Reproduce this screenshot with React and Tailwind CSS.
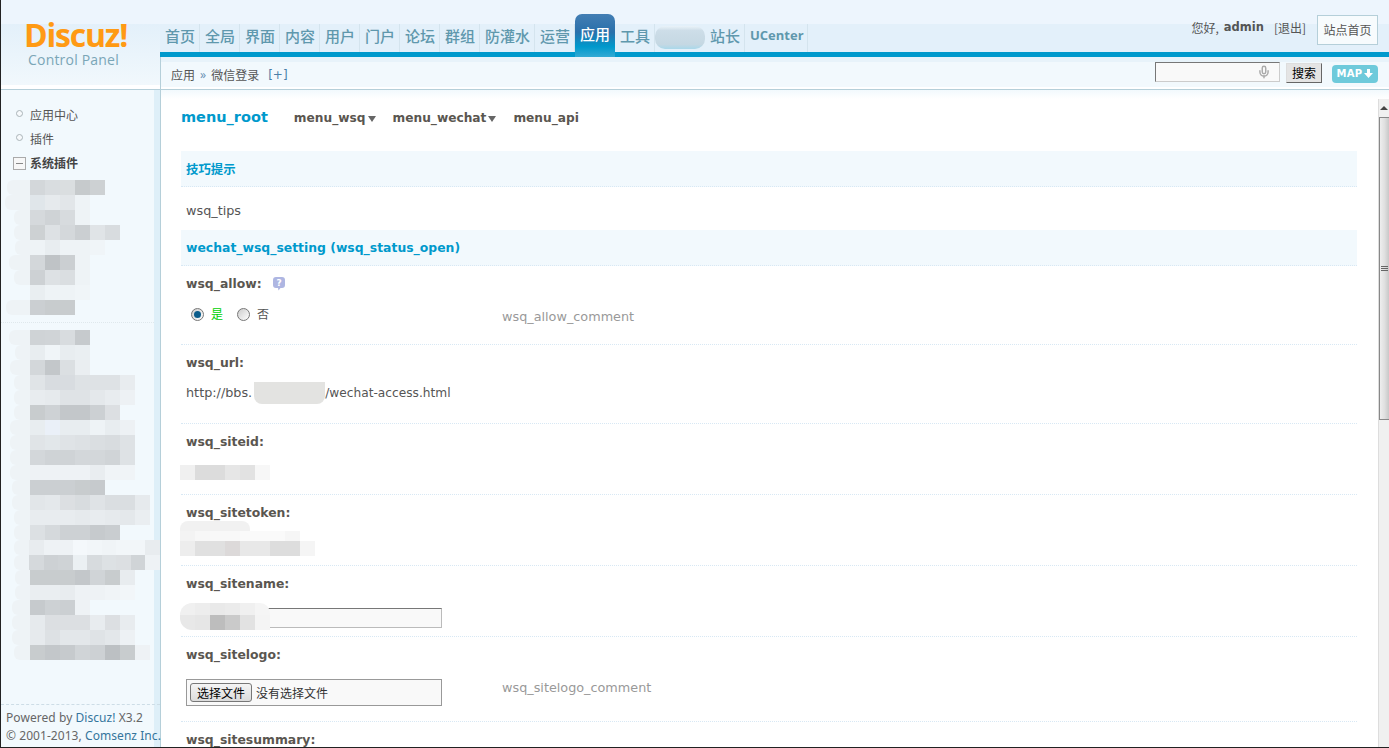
import React from "react";
import { Mic } from "lucide-react";

const CJK = "font-['Noto_Sans_CJK_SC',sans-serif]";
const LATIN = "font-['DejaVu_Sans','Noto_Sans_CJK_SC',sans-serif]";

const navItems = ["首页", "全局", "界面", "内容", "用户", "门户", "论坛", "群组", "防灌水", "运营"];

// blurred sidebar rows: left offset of the soft edge + grey cells
const sideBlur = [
  { lead: 23, cells: ["#d3d7da", "#d9dde0", "#dadee0", "#c6cacc", "#cdd1d3"] },
  { lead: 25, cells: ["#e0e6ea", "#e6eaed", "#e2e6e9", "#eef3f6"] },
  { lead: 16, cells: ["#d5d9dc", "#cfd3d6", "#d7dbde", "#eef3f6"] },
  { lead: 16, cells: ["#cdd1d3", "#dde1e4", "#d4d8db", "#cbcfd2", "#e0e4e7", "#d8dcdf"] },
  { lead: 15, cells: ["#eef3f6", "#e8edf0", "#eef3f6", "#eef3f6", "#f0f5f8"] },
  { lead: 21, cells: ["#d3d7da", "#bfc3c6", "#cbcfd2", "#eef3f6"] },
  { lead: 16, cells: ["#cdd1d4", "#dde1e4", "#dadee1", "#eef3f6"] },
  { lead: 0, cells: ["#e9eef1", "#eef3f6", "#eef3f6", "#f0f5f8"] },
  { lead: 24, cells: ["#cbcfd2", "#c8ccce", "#c8ccce"] },
];

const sideBlur2 = [
  { lead: 21, cells: ["#cfd3d6", "#d0d4d7", "#d8dcdf", "#c6cacd"] },
  { lead: 15, cells: ["#e8edf0", "#f0f5f8", "#e8edf0", "#eaeff2"] },
  { lead: 20, cells: ["#d3d7da", "#c3c7ca", "#dbdfe2", "#eaeef1"] },
  { lead: 16, cells: ["#e0e4e7", "#d8dce0", "#d8dce0", "#dee2e5", "#dee2e5", "#dee2e5", "#e8ecef"] },
  { lead: 16, cells: ["#e8ecef", "#e6eaed", "#dfe3e6", "#dfe3e6", "#e4e8eb", "#e8ecef", "#edf1f4"] },
  { lead: 16, cells: ["#c8ccce", "#ced2d5", "#c3c7ca", "#c3c7ca", "#ccd0d3", "#dcdfe2"] },
  { lead: 20, cells: ["#e8edf0", "#eaf0f8", "#e8edf0", "#e8edf0", "#eef3f6", "#e8edf0", "#edf1f4"] },
  { lead: 20, cells: ["#e0e4e7", "#e2e7ea", "#dfe3e6", "#dde1e4", "#dadee1", "#d8dcdf", "#dee2e5"] },
  { lead: 20, cells: ["#d3d7da", "#cfd3d6", "#cfd3d6", "#d3d7da", "#d3d7da", "#d0d4d7", "#dee2e5"] },
  { lead: 20, cells: ["#eef2f5", "#eef2f5", "#eef2f5", "#eef2f5", "#e9edf0", "#f0f4f7", "#f0f4f7"] },
  { lead: 18, cells: ["#cbcfd2", "#cbcfd2", "#cbcfd2", "#c8ccce", "#c6cacd"] },
  { lead: 18, cells: ["#e2e6e9", "#e4e8eb", "#dcdfe2", "#d8dcdf", "#dfe3e6", "#dadee1", "#dadee1", "#e6eaed"] },
  { lead: 16, cells: ["#e8ecef", "#e8ecef", "#e8ecef", "#e6eaed", "#e8ecef", "#e6eaed", "#e4e8eb", "#eaeef1"] },
  { lead: 16, cells: ["#dce0e3", "#d5d9dc", "#cdd1d4", "#cdd1d4", "#c6cacd", "#c9cdd0"] },
  { lead: 15, cells: ["#e8ecef", "#eef2f5", "#eef2f5", "#f4f8fb", "#f2f6f9", "#f0f4f7", "#f2f6f9", "#f2f6f9", "#e8ecef"] },
  { lead: 15, cells: ["#d5d9dc", "#cdd1d4", "#cfd3d6", "#ebf0f3", "#d7dbde", "#dde1e4", "#dcdfe2", "#d0d4d7", "#eef2f5"] },
  { lead: 15, cells: ["#c8ccce", "#c8ccce", "#c8ccce", "#c3c7ca", "#d0d4d7", "#c8ccce", "#e8ecef"] },
  { lead: 15, cells: ["#eaeef1", "#eaeef1", "#e8ecef", "#eef2f5", "#eef2f5", "#f0f4f7", "#f2f6f9"] },
  { lead: 18, cells: ["#c6cacd", "#cdd1d4", "#cbcfd2", "#eef2f5"] },
  { lead: 18, cells: ["#e6eaed", "#dcdfe2", "#dcdfe2", "#dcdfe2", "#e8ecef", "#dcdfe2", "#e8ecef"] },
  { lead: 18, cells: ["#e6eaed", "#dde1e4", "#e3e7ea", "#e3e7ea", "#dfe3e6", "#e3e7ea", "#edf1f4"] },
  { lead: 16, cells: ["#c8ccce", "#c3c7ca", "#c6cacd", "#d0d4d7", "#cdd1d4", "#bcc0c3", "#c8ccce", "#eef2f5"] },
];

function BlurRows({ rows }) {
  return (
    <div className="flex flex-col">
      {rows.map((row, i) => (
        <div key={i} className="flex h-[15px] justify-start">
          <div className="w-[29px] flex justify-end">
            <div className="h-[15px] rounded-l-[6px] bg-[#eef3f6]" style={{ width: row.lead }} />
          </div>
          {row.cells.map((c, j) => (
            <div key={j} className="h-[15px] w-[15px]" style={{ background: c }} />
          ))}
        </div>
      ))}
    </div>
  );
}

function Cells({ colors, className }) {
  return (
    <div className={"flex " + className}>
      {colors.map((c, i) => (
        <div key={i} className="h-full w-[15px]" style={{ background: c }} />
      ))}
    </div>
  );
}

function SideLink({ children }) {
  return (
    <div className={"flex h-[24px] items-center pl-[15px] text-[12px] text-[#555] " + CJK}>
      <span className="mb-[3px] mr-[7px] h-[7px] w-[7px] rounded-full border border-[#aab4b8] bg-[#f7fafc]" />
      {children}
    </div>
  );
}

function Sidebar() {
  return (
    <aside className="relative flex h-full w-[159px] shrink-0 flex-col bg-[#f2f9fd]">
      <div className="absolute inset-y-0 right-0 w-[6px] bg-[#deeff8]" />
      <div className="relative flex h-full flex-col pt-[13px]">
        <SideLink>应用中心</SideLink>
        <SideLink>插件</SideLink>
        <div className={"flex h-[24px] items-center pl-[12px] text-[12px] font-bold text-[#444] " + CJK}>
          <span className="mr-[4px] flex h-[13px] w-[13px] items-center justify-center border border-[#aaa] bg-[#f7f7f7]">
            <span className="h-px w-[7px] bg-[#888]" />
          </span>
          系统插件
        </div>
        <div className="mt-[5px]">
          <BlurRows rows={sideBlur} />
        </div>
        <div className="my-[7px] w-[153px] border-t border-dotted border-[#dfe8ec]" />
        <BlurRows rows={sideBlur2} />
        <div className="mt-auto h-[43px] whitespace-nowrap border-t border-dashed border-[#cddde6] pl-[5px] pt-[4px] font-['Noto_Sans',sans-serif] text-[12px] leading-[18px] tracking-[0.06px] text-[#666]">
          <div>
            Powered by <span className="text-[#34759c]">Discuz!</span> X3.2
          </div>
          <div>
            © 2001-2013, <span className="text-[#34759c]">Comsenz Inc.</span>
          </div>
        </div>
      </div>
    </aside>
  );
}

function Logo() {
  return (
    <div className="flex h-[90px] w-[159px] shrink-0 flex-col border-b border-[#b5cfd9] bg-[linear-gradient(#edf5fd_24px,#e3f0fa_24px,#f1f8fc_85px,#ffffff_85px)]">
      <div className="w-[153px] pl-[23px] pt-[19px]">
        <div className="h-[33px] font-['Open_Sans',sans-serif] text-[32px] font-bold leading-[32px] tracking-[-1.2px] text-[#ff9a14]">
          Discuz!
        </div>
        <div className="pl-[4px] font-['Open_Sans',sans-serif] text-[14px] leading-[16px] tracking-[0.2px] text-[#7aa6b7]">
          Control Panel
        </div>
      </div>
    </div>
  );
}

function NavItem({ children, w }) {
  return (
    <div className={"flex h-[28px] items-center border-r border-[#d4e4ee] pb-[4px] pl-[5px] text-[15px] font-medium text-[#5f98ad] " + w + " " + CJK}>
      {children}
    </div>
  );
}

function Header() {
  return (
    <header className="flex min-w-0 flex-1 flex-col">
      <div className="flex h-[52px] items-end bg-[linear-gradient(#edf5fd_24px,#e3f0fa_24px)]">
        {navItems.map((n) => (
          <NavItem key={n} w={n === "防灌水" ? "w-[55px]" : "w-[40px]"}>
            {n}
          </NavItem>
        ))}
        <div className={"relative z-10 -mb-[5px] h-[43px] w-[40px] rounded-t-[7px] bg-[linear-gradient(#437eb4,#2a70ab_42%,#0099cc_76%,#33aad4)] pl-[5px] pt-[8px] text-[15px] font-medium leading-[24px] text-white " + CJK}>
          应用
        </div>
        <NavItem w="w-[40px]">工具</NavItem>
        <div className="mb-[3px] h-[23px] w-[50px] rounded-[10px] bg-[linear-gradient(#eaf3f9,#cddde8_20%,#c5d8e3_80%,#a9d8ea)]" />
        <NavItem w="w-[40px]">站长</NavItem>
        <div className="flex h-[28px] w-[63px] items-center border-r border-[#d4e4ee] pb-[4px] pl-[5px] font-['Open_Sans',sans-serif] text-[13px] font-bold text-[#5f98ad]">
          UCenter
        </div>
        <div className="mb-[11px] ml-auto mr-[11px] flex items-center self-end">
          <span className={"text-[12px] text-[#555] " + CJK}>您好,</span>
          <span className={"ml-[5px] text-[11.5px] font-bold text-[#555] " + LATIN}>admin</span>
          <span className={"ml-[10px] text-[12px] text-[#555] " + CJK}>[退出]</span>
          <span className={"mb-[-4px] ml-[11px] flex h-[30px] w-[61px] items-center justify-center border border-[#b5cfd9] bg-[#f7fbfd] text-[12px] text-[#555] " + CJK}>
            站点首页
          </span>
        </div>
      </div>
      <div className="h-[5px] bg-[#0099cc]" />
      <div className="flex h-[33px] flex-col border-b border-l border-[#b5cfd9] bg-white">
        <div className="h-[5px] bg-[#e8f3fa]" />
        <div className="flex h-[25px] items-center bg-[#f2f9fd] pl-[10px]">
          <span className={"text-[12px] text-[#555] " + CJK}>应用</span>
          <span className="mx-[5px] text-[12px] text-[#6b93b5]">»</span>
          <span className={"text-[12px] text-[#555] " + CJK}>微信登录</span>
          <span className={"ml-[9px] text-[12px] text-[#4a7fa8] " + LATIN}>[+]</span>
          <div className="mb-[6px] ml-auto flex h-[20px] w-[125px] items-center justify-end border-b border-l border-r border-t border-b-[#ccc] border-l-[#777] border-r-[#ccc] border-t-[#777] bg-[#f9f9f9] pr-[8px]">
            <Mic size={14} className="text-[#aaa]" strokeWidth={2.5} />
          </div>
          <button className={"mb-[4px] ml-[6px] flex h-[20px] w-[36px] items-center justify-center border-b border-l border-r border-t border-b-[#666] border-l-[#ddd] border-r-[#666] border-t-[#ddd] bg-[#e4e4e4] text-[12px] text-black " + CJK}>
            搜索
          </button>
          <div className="mb-[2px] ml-[10px] mr-[11px] flex h-[18px] w-[46px] items-center justify-center gap-[2px] rounded-[4px] bg-[#6ecadb]">
            <span className="font-['DejaVu_Sans',sans-serif] text-[10px] font-bold tracking-[0.3px] text-white">MAP</span>
            <svg width="9" height="9" viewBox="0 0 9 9">
              <path d="M3 0h3v4h3L4.500 9 0 4h3z" fill="#fff" />
            </svg>
          </div>
        </div>
      </div>
    </header>
  );
}

function Caret() {
  return <span className="ml-[2px] mt-[1px] border-x-[4px] border-t-[6px] border-x-transparent border-t-[#666]" />;
}

function SectionHead({ children, className }) {
  return (
    <div className={"flex h-[36px] items-center border-b border-dotted border-[#d8e8f4] bg-[#f2f9fd] pl-[5px] pt-[2px] text-[12.4px] font-bold text-[#0099cc] " + className}>
      {children}
    </div>
  );
}

function Row({ label, height, help, comment, children }) {
  return (
    <div className={"flex flex-col border-b border-dotted border-[#d8e8f4] pl-[5px] " + height}>
      <div className="flex h-[34px] shrink-0 items-center pt-[2px] text-[12.4px] font-bold text-[#5a5650]">
        {label}
        {help && (
          <svg className="ml-[10px] -translate-y-[1px]" width="14" height="15" viewBox="0 0 14 15">
            <path d="M4 1h6a3 3 0 0 1 3 3v5a3 3 0 0 1-3 3H8.500L6.500 14.500 6 12H4a3 3 0 0 1-3-3V4a3 3 0 0 1 3-3z" fill="#aeb6e2" />
            <text x="7" y="10" textAnchor="middle" fontSize="9" fontWeight="700" fill="#fff">?</text>
          </svg>
        )}
      </div>
      <div className="flex">
        <div className="w-[316px] shrink-0">{children}</div>
        {comment && <div className="flex h-[32px] items-center pt-[2px] text-[12.8px] text-[#999]">{comment}</div>}
      </div>
    </div>
  );
}

function Radio({ checked }) {
  return (
    <span className="flex h-[13px] w-[13px] items-center justify-center rounded-full border border-[#777] bg-[linear-gradient(135deg,#ccc,#fff)]">
      {checked && <span className="h-[7px] w-[7px] rounded-full bg-[#0b5c8a]" />}
    </span>
  );
}

function Content() {
  return (
    <main className={"flex h-full flex-1 flex-col overflow-hidden " + LATIN}>
      <div className="h-[9px] shrink-0 bg-[linear-gradient(#f2f9fd,#ffffff)]" />
      <div className="flex min-h-0 flex-1">
        <div className="min-w-0 flex-1 overflow-hidden bg-white pl-[20px] pr-[21px]">
          <div className="mb-[16px] flex h-[36px] items-center pt-[2px] text-[12.2px] font-bold text-[#5a5650]">
            <span className="mr-[26px] text-[14.5px] text-[#0099cc]">menu_root</span>
            <span>menu_wsq</span>
            <Caret />
            <span className="ml-[17px]">menu_wechat</span>
            <Caret />
            <span className="ml-[17px]">menu_api</span>
          </div>
          <SectionHead className={CJK}>技巧提示</SectionHead>
          <div className="flex h-[43px] items-center pl-[5px] pt-[5px] text-[12.8px] text-[#555]">wsq_tips</div>
          <SectionHead>wechat_wsq_setting (wsq_status_open)</SectionHead>

          <Row label="wsq_allow:" help height="h-[79px]" comment="wsq_allow_comment">
            <div className={"flex h-[28px] items-center pl-[5px] text-[12px] " + CJK}>
              <Radio checked />
              <span className="ml-[7px] text-[#00d000]">是</span>
              <span className="ml-[14px]">
                <Radio />
              </span>
              <span className="ml-[7px] text-[#555]">否</span>
            </div>
          </Row>

          <Row label="wsq_url:" height="h-[79px]">
            <div className="flex h-[28px] items-center text-[12.8px] text-[#555]">
              http://bbs.
              <span className="ml-[2px] h-[22px] w-[71px] rounded-b-[8px] bg-[#e3e3e1]" />
              <span className="text-[12.2px]">/wechat-access.html</span>
            </div>
          </Row>

          <Row label="wsq_siteid:" height="h-[71px]">
            <Cells
              className="-ml-[6px] mt-[7px] h-[15px]"
              colors={["#f0f0f0", "#dcdcdc", "#dcdcdc", "#e6e6e6", "#e2e2e2", "#f7f7f7"]}
            />
          </Row>

          <Row label="wsq_sitetoken:" height="h-[71px]">
            <div className="-ml-[6px] -mt-[8px] flex flex-col">
              <div className="h-[10px] w-[70px] rounded-t-[8px] bg-[#f1f1f1]" />
              <Cells className="h-[10px]" colors={["#f3f3f3", "#f7f7f7", "#f8f8f8", "#f8f8f8", "#fafafa", "#fafafa", "#fafafa", "#f6f6f6"]} />
              <Cells
                className="h-[15px]"
                colors={["#ededed", "#e0e0e0", "#e0e0e0", "#dcd9d9", "#e8e8e8", "#e8e8e8", "#dddddd", "#dddddd", "#f5f5f5"]}
              />
            </div>
          </Row>

          <Row label="wsq_sitename:" height="h-[71px]">
            <div className="relative pt-[8px]">
              <div className="h-[20px] w-[256px] border-b border-l border-r border-t border-b-[#bbb] border-l-[#777] border-r-[#bbb] border-t-[#777] bg-[#f9f9f9]" />
              {/* blur sits over the input */}
              <div className="absolute -left-[6px] top-[3px] flex flex-col overflow-hidden rounded-l-[12px] rounded-tr-[10px]">
                <Cells className="h-[12px]" colors={["#f0f0f0", "#ededed", "#e9e9e9", "#ebebeb", "#f0f0f0", "#f5f5f5"]} />
                <Cells className="h-[15px]" colors={["#e8e8e8", "#e6e6e6", "#bdbdbd", "#cacaca", "#e2e2e2", "#f4f4f4"]} />
              </div>
            </div>
          </Row>

          <Row label="wsq_sitelogo:" height="h-[85px]" comment="wsq_sitelogo_comment">
            <div className={"mt-[8px] flex h-[27px] w-[256px] items-center border border-[#999] bg-[#f9f9f9] pl-[3px] text-[12px] text-[#333] " + CJK}>
              <span className="flex h-[19px] w-[62px] items-center justify-center rounded-[3px] border border-[#777] bg-[linear-gradient(#f4f4f4,#dcdcdc)] text-black">
                选择文件
              </span>
              <span className="ml-[4px]">没有选择文件</span>
            </div>
          </Row>

          <div className="flex h-[34px] items-center pl-[5px] pt-[2px] text-[12.4px] font-bold text-[#5a5650]">wsq_sitesummary:</div>
        </div>
        <div className="flex w-[11px] shrink-0 flex-col border-l border-[#ddd] bg-[#f0f0f0]">
          <div className="flex h-[18px] items-center justify-center">
            <span className="border-x-[4px] border-b-[4px] border-x-transparent border-b-[#444]" />
          </div>
          <div className="flex h-[303px] items-center justify-center border border-r-0 border-[#888] bg-[linear-gradient(90deg,#eee,#e0e0e0_50%,#c8c8c8)]">
            <div className="flex w-[7px] flex-col gap-[1px]">
              <div className="h-px bg-[#666]" />
              <div className="h-px bg-[#666]" />
              <div className="h-px bg-[#666]" />
            </div>
          </div>
        </div>
      </div>
    </main>
  );
}

export default function App() {
  return (
    <div className="box-border flex h-[748px] w-[1389px] flex-col overflow-hidden border-b border-l border-[#222] bg-white">
      <div className="flex h-[90px] shrink-0">
        <Logo />
        <Header />
      </div>
      <div className="flex min-h-0 flex-1">
        <div className="border-r border-[#b5cfd9]">
          <Sidebar />
        </div>
        <Content />
      </div>
    </div>
  );
}
